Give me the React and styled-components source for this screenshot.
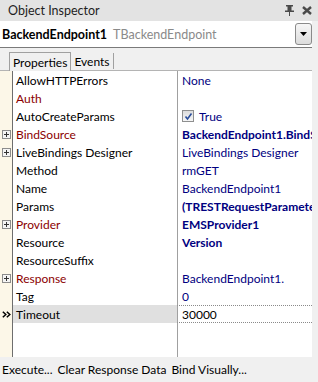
import React from "react";
import styled, { createGlobalStyle } from "styled-components";

const Global = createGlobalStyle`
  html, body { margin: 0; padding: 0; background: #f0f0f0; }
  body { font-family: Lato, "Open Sans", sans-serif; font-size: 12px; }
`;

const Panel = styled.div`
  width: 318px;
  height: 382px;
  display: flex;
  flex-direction: column;
  background: #f0f0f0;
  overflow: hidden;
`;

const TitleBar = styled.div`
  height: 21px;
  flex: none;
  display: flex;
  align-items: center;
  padding: 0 6px 0 8px;
  background: #e3e3e3;
  color: #1e1e1e;
  font-size: 12.5px;
`;

const Title = styled.span`
  flex: 1;
`;

const TitleIcons = styled.div`
  display: flex;
  align-items: center;
  gap: 8px;
`;

const Middle = styled.div`
  flex: 1;
  display: flex;
  flex-direction: column;
  margin-right: 6px;
  min-height: 0;
`;

const SelectorRow = styled.div`
  flex: none;
  display: flex;
  align-items: center;
  padding: 0 0 0 2px;
  background: #fff;
  border-bottom: 1px solid #7a7a7a;
  box-sizing: border-box;
  height: 27px;
`;

const CompName = styled.span`
  font-weight: 700;
  color: #000;
  font-size: 12.5px;
`;

const CompClass = styled.span`
  color: #8a8a8a;
  margin-left: 6px;
  flex: 1;
  font-size: 12.5px;
`;

const DropButton = styled.div`
  width: 17px;
  height: 22px;
  box-sizing: border-box;
  border: 1px solid #8a8a8a;
  border-radius: 3px;
  background: linear-gradient(#f6f6f6, #dcdcdc);
  display: flex;
  align-items: center;
  justify-content: center;
`;

const TabsRow = styled.div`
  height: 23px;
  flex: none;
  display: flex;
  align-items: flex-end;
  padding-left: 9px;
  box-sizing: border-box;
  border-bottom: 1px solid #b4b4b4;
`;

const Tab = styled.div`
  box-sizing: border-box;
  display: flex;
  align-items: center;
  padding: 0 3px;
  color: #000;
  border-right: 1px solid #a0a0a0;
  ${(p) =>
    p.$active
      ? `
    border: 1px solid #a0a0a0;
    border-bottom: none;
    height: 19px;
    margin-bottom: -1px;
    background: #f0f0f0;
  `
      : `
    height: 16px;
    margin-bottom: 1px;
  `}
`;

const Grid = styled.div`
  flex: 1;
  display: flex;
  flex-direction: column;
  background: #fff;
  min-height: 0;
`;

const Row = styled.div`
  display: flex;
  height: 18px;
  flex: none;
`;

const Filler = styled.div`
  display: flex;
  flex: 1;
`;

const Gutter = styled.div`
  width: 12px;
  flex: none;
  background: #fcf7e8;
  border-right: 1px solid #6e6e6e;
  display: flex;
  align-items: center;
  justify-content: center;
`;

const NameCell = styled.div`
  width: 161px;
  flex: none;
  padding-left: 3px;
  display: flex;
  align-items: center;
  white-space: nowrap;
  overflow: hidden;
  color: ${(p) => (p.$ref ? "#8b0000" : "#000")};
  background: ${(p) => (p.$selected ? "#e0e0e0" : "transparent")};
`;

const ValueCell = styled.div`
  flex: 1;
  min-width: 0;
  border-left: 1px solid #a0a0a0;
  padding-left: 4px;
  display: flex;
  align-items: center;
  gap: 5px;
  white-space: nowrap;
  overflow: hidden;
  color: #000080;
  font-weight: ${(p) => (p.$bold ? 700 : 400)};
  box-sizing: border-box;
  ${(p) =>
    p.$selected
      ? `border-top: 1px dotted #8a8a8a; border-bottom: 1px dotted #8a8a8a; color: #000;`
      : ""}
`;

const PlusBox = styled.div`
  width: 9px;
  height: 9px;
  box-sizing: border-box;
  border: 1px solid #8c8c8c;
  background: #f4f4f4;
  position: relative;
  &::before {
    content: "";
    position: absolute;
    left: 1px;
    right: 1px;
    top: 3px;
    height: 1px;
    background: #333;
  }
  &::after {
    content: "";
    position: absolute;
    top: 1px;
    bottom: 1px;
    left: 3px;
    width: 1px;
    background: #333;
  }
`;

const CheckBox = styled.div`
  width: 12px;
  height: 12px;
  box-sizing: border-box;
  border: 1px solid #8e8f8f;
  background: linear-gradient(#dcdcdc, #f6f6f6);
  display: flex;
  align-items: center;
  justify-content: center;
`;

const BottomBar = styled.div`
  height: 25px;
  flex: none;
  display: flex;
  align-items: center;
  padding-left: 2px;
  gap: 5px;
  background: #f0f0f0;
`;

const Verb = styled.span`
  color: #000;
`;

const rows = [
  { name: "AllowHTTPErrors", value: "None" },
  { name: "Auth", ref: true, value: "" },
  { name: "AutoCreateParams", value: "True", check: true },
  { name: "BindSource", ref: true, plus: true, value: "BackendEndpoint1.BindSource", bold: true },
  { name: "LiveBindings Designer", plus: true, value: "LiveBindings Designer" },
  { name: "Method", value: "rmGET" },
  { name: "Name", value: "BackendEndpoint1" },
  { name: "Params", value: "(TRESTRequestParameters)", bold: true },
  { name: "Provider", ref: true, plus: true, value: "EMSProvider1", bold: true },
  { name: "Resource", value: "Version", bold: true },
  { name: "ResourceSuffix", value: "" },
  { name: "Response", ref: true, plus: true, value: "BackendEndpoint1." },
  { name: "Tag", value: "0" },
  { name: "Timeout", value: "30000", selected: true },
];

const PinIcon = () => (
  <svg width="9" height="11" viewBox="0 0 9 11">
    <rect x="1" y="0" width="7" height="1.5" fill="#4a4a4a" />
    <rect x="2.5" y="1" width="4" height="5" fill="#4a4a4a" />
    <rect x="0" y="5.5" width="9" height="1.5" fill="#4a4a4a" />
    <rect x="4" y="7" width="1" height="4" fill="#4a4a4a" />
  </svg>
);

const CloseIcon = () => (
  <svg width="10" height="9" viewBox="0 0 10 9">
    <path d="M1 1 L9 8 M9 1 L1 8" stroke="#4a4a4a" strokeWidth="2.4" />
  </svg>
);

const DownTri = () => (
  <svg width="7" height="4" viewBox="0 0 7 4">
    <path d="M0 0 H7 L3.5 4 Z" fill="#000" />
  </svg>
);

const Check = () => (
  <svg width="9" height="9" viewBox="0 0 9 9">
    <path d="M1.5 4.5 L3.5 7 L7.5 1.5" stroke="#2a4d9a" strokeWidth="1.6" fill="none" />
  </svg>
);

const SelArrow = () => (
  <svg width="9" height="7" viewBox="0 0 9 7">
    <path d="M0.8 0.8 L3.8 3.5 L0.8 6.2 M4.8 0.8 L7.8 3.5 L4.8 6.2" stroke="#000" strokeWidth="1.5" fill="none" />
  </svg>
);

export default function App() {
  return (
    <Panel>
      <Global />
      <TitleBar>
        <Title>Object Inspector</Title>
        <TitleIcons>
          <PinIcon />
          <CloseIcon />
        </TitleIcons>
      </TitleBar>
      <Middle>
        <SelectorRow>
          <CompName>BackendEndpoint1</CompName>
          <CompClass>TBackendEndpoint</CompClass>
          <DropButton>
            <DownTri />
          </DropButton>
        </SelectorRow>
        <TabsRow>
          <Tab $active>Properties</Tab>
          <Tab>Events</Tab>
        </TabsRow>
        <Grid>
          {rows.map((r) => (
            <Row key={r.name}>
              <Gutter>
                {r.plus && <PlusBox />}
                {r.selected && <SelArrow />}
              </Gutter>
              <NameCell $ref={r.ref} $selected={r.selected}>
                {r.name}
              </NameCell>
              <ValueCell $bold={r.bold} $selected={r.selected}>
                {r.check && (
                  <CheckBox>
                    <Check />
                  </CheckBox>
                )}
                {r.value}
              </ValueCell>
            </Row>
          ))}
          <Filler>
            <Gutter />
            <NameCell />
            <ValueCell />
          </Filler>
        </Grid>
      </Middle>
      <BottomBar>
        <Verb>Execute...</Verb>
        <Verb>Clear Response Data</Verb>
        <Verb>Bind Visually...</Verb>
      </BottomBar>
    </Panel>
  );
}
